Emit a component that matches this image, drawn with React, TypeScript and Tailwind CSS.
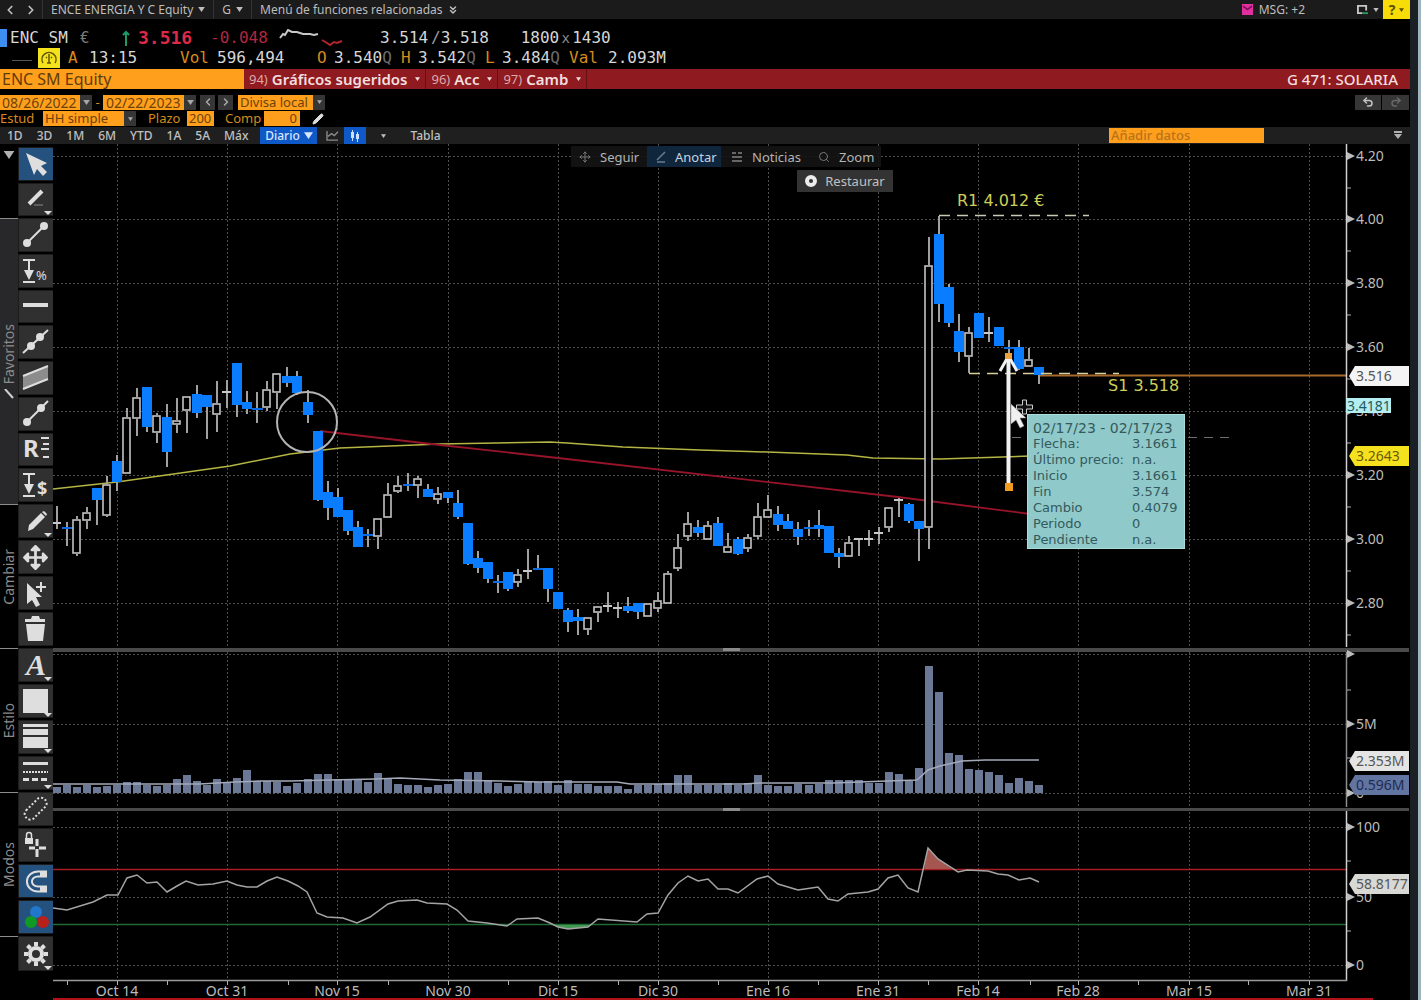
import React from 'react';
import { FaArrowsAlt } from 'react-icons/fa';
import { ChevronLeft, ChevronRight, ChevronsDown, Undo2, Redo2, Move, Search, Pencil } from 'lucide-react';

// y values per session: [high, body top, body bottom, low, kind]
// d = down (filled), u = up (hollow), x = flat white, b = flat blue
type Candle = [number, number, number, number, 'd' | 'u' | 'x' | 'b'];

const candles: Candle[] = [
  [506, 523, 523, 529, 'x'], [522, 528, 528, 546, 'b'], [516, 519, 554, 556, 'u'], [507, 512, 521, 529, 'u'],
  [488, 488, 500, 525, 'd'], [476, 484, 516, 517, 'u'], [455, 461, 482, 491, 'd'], [408, 417, 474, 474, 'u'],
  [388, 397, 419, 436, 'u'], [387, 387, 427, 432, 'd'], [413, 415, 433, 443, 'u'], [404, 417, 452, 467, 'd'],
  [398, 420, 425, 433, 'u'], [396, 396, 411, 433, 'u'], [385, 394, 413, 418, 'd'], [395, 395, 407, 439, 'd'],
  [381, 403, 415, 432, 'u'], [380, 392, 392, 408, 'x'], [363, 363, 405, 417, 'd'], [391, 402, 409, 414, 'd'],
  [392, 409, 409, 423, 'b'], [381, 389, 408, 411, 'u'], [373, 373, 393, 409, 'u'], [367, 376, 383, 387, 'd'],
  [371, 376, 393, 395, 'd'], [390, 402, 415, 423, 'd'], [431, 431, 500, 501, 'd'], [481, 492, 508, 520, 'd'],
  [488, 497, 517, 517, 'd'], [510, 510, 531, 535, 'd'], [521, 527, 547, 547, 'd'], [529, 535, 535, 547, 'b'],
  [518, 518, 537, 549, 'u'], [483, 494, 518, 518, 'u'], [476, 485, 492, 493, 'u'], [473, 485, 485, 491, 'b'],
  [476, 478, 486, 498, 'u'], [484, 489, 497, 497, 'd'], [487, 493, 500, 504, 'u'], [492, 492, 498, 503, 'd'],
  [490, 503, 517, 519, 'd'], [523, 523, 564, 565, 'd'], [551, 558, 568, 573, 'd'], [562, 562, 579, 583, 'd'],
  [575, 582, 582, 593, 'b'], [572, 572, 589, 591, 'd'], [569, 574, 583, 587, 'u'], [549, 571, 571, 579, 'x'],
  [555, 569, 569, 570, 'b'], [568, 568, 589, 602, 'd'], [592, 592, 609, 609, 'd'], [608, 610, 622, 632, 'd'],
  [609, 617, 621, 635, 'd'], [617, 617, 630, 635, 'u'], [606, 606, 613, 622, 'u'], [592, 606, 606, 612, 'x'],
  [602, 608, 608, 618, 'x'], [597, 606, 611, 613, 'd'], [603, 603, 612, 619, 'd'], [603, 603, 617, 617, 'u'],
  [592, 600, 609, 612, 'u'], [571, 573, 604, 604, 'u'], [534, 547, 569, 571, 'u'], [512, 523, 537, 541, 'u'],
  [520, 527, 533, 537, 'd'], [521, 525, 540, 540, 'u'], [517, 523, 546, 546, 'd'], [533, 546, 553, 553, 'u'],
  [537, 539, 554, 555, 'd'], [534, 537, 549, 552, 'u'], [503, 516, 537, 539, 'u'], [495, 509, 518, 518, 'u'],
  [506, 514, 525, 531, 'd'], [514, 521, 529, 529, 'd'], [522, 529, 537, 545, 'd'], [520, 528, 528, 536, 'b'],
  [510, 525, 529, 537, 'd'], [526, 526, 553, 553, 'd'], [548, 553, 557, 568, 'd'], [536, 542, 557, 557, 'u'],
  [539, 539, 539, 556, 'x'], [530, 539, 539, 546, 'x'], [527, 533, 533, 544, 'x'], [507, 507, 528, 532, 'u'],
  [498, 500, 500, 517, 'x'], [503, 504, 521, 523, 'd'], [521, 521, 529, 561, 'd'], [237, 265, 528, 549, 'u'],
  [216, 234, 304, 322, 'd'], [284, 287, 323, 327, 'd'], [314, 331, 352, 362, 'd'], [327, 332, 357, 373, 'u'],
  [313, 313, 338, 338, 'd'], [317, 333, 333, 342, 'x'], [327, 327, 346, 346, 'd'], [340, 348, 348, 353, 'b'],
  [340, 347, 369, 370, 'd'], [348, 359, 367, 367, 'u'], [367, 367, 375, 384, 'd'],
];

const volumes = [
  6, 8, 6, 8, 6, 7, 8, 11, 11, 8, 7, 8, 14, 18, 12, 8, 14, 11, 15, 23, 12, 12, 11, 7, 10, 14, 19, 19, 14, 14, 13, 11, 20,
  14, 9, 8, 8, 6, 8, 9, 14, 21, 21, 13, 10, 7, 9, 11, 11, 12, 8, 13, 9, 9, 7, 7, 7, 4, 8, 8, 9, 10, 18, 18, 8, 8, 8, 10,
  8, 10, 18, 8, 7, 7, 9, 8, 9, 13, 13, 13, 13, 10, 10, 21, 19, 12, 25, 127, 101, 40, 38, 24, 23, 21, 18, 10, 15, 12, 8,
];

const movingAverage =
  '53,489 117,482 230,466 290,454 340,448 440,444 550,442 567,443 623,447 700,450 767,452 847,455 873,458 940,459 1030,456';

const volumeAverage =
  '53,784 200,784 235,782 260,781 290,781 330,780 375,779 400,778 440,780 500,781 540,782 617,782 630,784 743,784 760,783 833,783 887,781 917,780 928,770 940,766 962,761 985,760 1039,760';

const rsi =
  '53,908 67,910 93,902 107,895 118,895 127,878 137,875 147,883 157,882 167,892 177,886 186,881 198,885 213,884 227,881 237,885 247,887 257,887 267,881 277,877 288,881 298,886 307,892 317,913 327,917 343,918 357,923 370,917 388,904 398,901 417,900 427,903 447,904 457,910 468,921 487,923 507,926 517,919 538,918 550,923 558,927 568,929 588,927 598,919 637,922 647,914 658,913 668,895 678,883 688,876 698,881 708,879 718,889 728,889 738,893 757,879 768,876 778,884 798,890 818,887 828,899 838,901 848,894 868,892 878,889 888,878 898,875 908,888 918,892 928,848 938,859 958,872 967,870 988,871 998,874 1008,875 1019,880 1030,878 1039,882';

const dates: [number, string][] = [
  [117, 'Oct 14'], [227, 'Oct 31'], [337, 'Nov 15'], [448, 'Nov 30'], [558, 'Dic 15'], [658, 'Dic 30'],
  [768, 'Ene 16'], [878, 'Ene 31'], [978, 'Feb 14'], [1078, 'Feb 28'], [1189, 'Mar 15'], [1309, 'Mar 31'],
];

const priceLevels: [number, string][] = [
  [156, '4.20'], [219, '4.00'], [283, '3.80'], [347, '3.60'], [411, '3.40'], [475, '3.20'], [539, '3.00'], [603, '2.80'],
];

const lowerLevels: [number, string][] = [
  [654, ''], [724, '5M'], [793, '0'], [827, '100'], [897, '50'], [965, '0'],
];

const minorX = [67, 167, 288, 388, 508, 618, 718, 818, 928, 1030, 1138, 1248];
const minorY = [188, 251, 315, 379, 443, 507, 571, 635, 690, 758, 861, 931];

const candleX = (i: number) => Math.round(57 + i * 10.02);

const Caret: React.FC<{ className?: string }> = ({ className = 'w-[7px] h-[5px]' }) => (
  <svg viewBox="0 0 8 6" className={`shrink-0 ${className}`} fill="currentColor">
    <path d="M0 0h8L4 6z" />
  </svg>
);

const CandleStick: React.FC<{ x: number; c: Candle }> = ({ x, c }) => {
  const [high, top, bottom, low, kind] = c;
  return (
    <g>
      <path d={`M${x} ${high}V${top}M${x} ${bottom}V${low}`} stroke="#a0a0a0" strokeWidth="2" />
      {kind === 'd' && <rect x={x - 5} y={top} width="10" height={bottom - top} fill="#0a7cff" />}
      {kind === 'u' && (
        <rect x={x - 4} y={top + 1} width="7" height={Math.max(bottom - top - 2, 3)} fill="#000" stroke="#c4c4c4" strokeWidth="1.6" />
      )}
      {kind === 'x' && <rect x={x - 5} y={top - 1} width="9" height="2" fill="#c8c8c8" />}
      {kind === 'b' && <rect x={x - 5} y={top - 1} width="11" height="2" fill="#0a6ae0" />}
    </g>
  );
};

const Tag: React.FC<{ y: number; label: string; bg: string; color: string }> = ({ y, label, bg, color }) => (
  <g>
    <path d={`M1349 ${y}l6 -10h54v20h-54z`} fill={bg} />
    <text x="1356" y={y + 5} fontSize="14" fill={color}>
      {label}
    </text>
  </g>
);

const Chart: React.FC = () => (
  <svg viewBox="53 144 1357 856" className="block w-full h-auto" fontFamily='"Noto Sans", sans-serif'>
    <rect x="53" y="144" width="1357" height="856" fill="#000" />

    {/* Grid */}
    <g stroke="#505050" strokeDasharray="2 2">
      {dates.map(([x]) => (
        <path key={x} d={`M${x + 0.5} 144V981`} />
      ))}
      {[...priceLevels, ...lowerLevels].map(([y]) => (
        <path key={y} d={`M53 ${y + 0.5}H1346`} />
      ))}
    </g>

    {/* Volume */}
    {volumes.map((h, i) => (
      <rect key={i} x={candleX(i) - 4} y={793 - h} width="8" height={h} fill="#6b7896" />
    ))}
    <polyline points={volumeAverage} fill="none" stroke="#a4aaba" strokeWidth="1.5" />

    {/* RSI */}
    <path d="M53 869.5H1346" stroke="#a81c24" strokeWidth="1.5" />
    <path d="M53 924.5H1346" stroke="#1f6a35" strokeWidth="1.5" />
    <path d="M924 869L928 848L938 859L952 869z" fill="#a65650" />
    <path d="M553 925L558 927L568 929L588 927L591 925z" fill="#3f9a50" />
    <polyline points={rsi} fill="none" stroke="#a4a4a4" strokeWidth="1.5" />

    {/* Overlays under the candles */}
    <polyline points={movingAverage} fill="none" stroke="#b5b544" strokeWidth="1.5" />
    <path d="M320 431L440 445L558 458L898 497L1030 514" fill="none" stroke="#96142a" strokeWidth="1.8" />
    <path d="M1040 375.5H1346" stroke="#a86a2a" strokeWidth="2" />
    {candles.map((c, i) => (
      <CandleStick key={i} x={candleX(i)} c={c} />
    ))}
    <circle cx="307" cy="422" r="30" fill="none" stroke="#b4b4b4" strokeWidth="2" />

    {/* Support and resistance */}
    <path d="M939 215.5H1089" stroke="#c9c9b4" strokeWidth="1.5" strokeDasharray="11 7" />
    <path d="M969 373.5H1119" stroke="#d9cf9a" strokeWidth="1.5" strokeDasharray="11 7" />
    <path d="M1012 437.5H1230" stroke="#6e6e6e" strokeDasharray="9 7" />
    <g fontFamily='"DejaVu Sans", sans-serif' fontSize="16" fill="#cccf58">
      <text x="957" y="206">R1 4.012 €</text>
      <text x="1108" y="391">S1 3.518</text>
    </g>

    {/* Measuring arrow and pointer */}
    <path d="M1008.5 358V486" stroke="#f2f2f2" strokeWidth="4" />
    <path d="M1000 371L1008.500 356L1017 371" fill="none" stroke="#f2f2f2" strokeWidth="3" />
    <rect x="1005" y="353" width="7" height="6" fill="#f0a040" />
    <rect x="1005" y="483" width="8" height="8" fill="#f09a1e" />
    <path d="M1011 404v20l5 -4l4 8l4 -2l-4 -8h6z" fill="#f0f0f0" stroke="#888" strokeWidth="0.5" />
    <path d="M1022.500 400h4v5h6v4h-6v5h-4v-5h-6v-4h6z" fill="#111" stroke="#cfcfcf" />

    {/* Panel separators */}
    <g fill="#4a4a4a">
      <rect x="53" y="648" width="1356" height="4" />
      <rect x="53" y="808" width="1356" height="3" />
      <rect x="723" y="648" width="17" height="3" fill="#8a8a8a" />
      <rect x="723" y="808" width="17" height="3" fill="#8a8a8a" />
    </g>

    {/* Axes */}
    <path d="M1346.500 144V647M1346.500 811V981" stroke="#d0d0d0" strokeWidth="1.5" />
    <path d="M1346.500 652V807" stroke="#8d8d8d" strokeWidth="1.5" />
    <path d="M53 980.500H1347" stroke="#9a9a9a" strokeWidth="1.5" />
    <g stroke="#b0b0b0">
      {minorY.map((y) => (
        <path key={y} d={`M1347 ${y}h4`} />
      ))}
      {minorX.map((x) => (
        <path key={x} d={`M${x + 0.5} 981v4`} />
      ))}
      {dates.map(([x]) => (
        <path key={x} d={`M${x + 0.5} 981v4`} />
      ))}
    </g>
    <g fontSize="14" fill="#bcbcbc">
      {[...priceLevels, ...lowerLevels].map(([y, label]) => (
        <g key={y}>
          <path d={`M1347 ${y - 4}l8 4l-8 4z`} />
          <text x="1356" y={y + 5}>{label}</text>
        </g>
      ))}
      {dates.map(([x, label]) => (
        <text key={label} x={x} y="996" textAnchor="middle">{label}</text>
      ))}
    </g>
    <Tag y={376} label="3.516" bg="#f4f4f4" color="#555" />
    <rect x="1346" y="398" width="45" height="15" fill="#b4eef0" />
    <text x="1347" y="411" fontSize="14" fill="#1f5a60">3.4181</text>
    <Tag y={456} label="3.2643" bg="#f5e11e" color="#6b5a00" />
    <Tag y={761} label="2.353M" bg="#e4e4e4" color="#555" />
    <Tag y={785} label="0.596M" bg="#6274a0" color="#1c2c54" />
    <Tag y={884} label="58.8177" bg="#d8d8d4" color="#555" />
    <rect x="53" y="998" width="1320" height="2" fill="#b01218" />
  </svg>
);

const cornerMark = <path d="M25 29h8l-4 4z" />;

const tapeArrow = (
  <>
    <path d="M4 6h12M10 6v12M4 28h12" stroke="currentColor" strokeWidth="2" />
    <path d="M5 16h10l-5 10z" />
  </>
);

const toolGroups: { label: string; height: string; tools: { name: string; active?: boolean; icon: React.ReactNode }[] }[] = [
  {
    label: '',
    height: 'h-[71px]',
    tools: [
      { name: 'Seleccionar', active: true, icon: <path d="M7 6l21 10l-6 3l6 6l-4 4l-6 -7l-3 6z" /> },
      {
        name: 'Dibujar',
        icon: (
          <>
            <path d="M10 22L23 9" stroke="currentColor" strokeWidth="4" />
            <path d="M15 23h9" stroke="#8a8a8a" strokeWidth="1" />
            {cornerMark}
          </>
        ),
      },
    ],
  },
  {
    label: 'Favoritos',
    height: 'h-[286px]',
    tools: [
      {
        name: 'Línea',
        icon: (
          <>
            <path d="M8 25L25 8" stroke="currentColor" strokeWidth="2" />
            <circle cx="8" cy="25" r="4" />
            <circle cx="25" cy="8" r="4" />
          </>
        ),
      },
      {
        name: 'Cambio porcentual',
        icon: (
          <>
            {tapeArrow}
            <text x="17" y="26" fontSize="13">%</text>
          </>
        ),
      },
      { name: 'Horizontal', icon: <path d="M4 14h25v4h-25z" /> },
      {
        name: 'Recta',
        icon: (
          <>
            <path d="M4 28L29 5" stroke="currentColor" strokeWidth="2" />
            <circle cx="12" cy="21" r="4" />
            <circle cx="21" cy="12" r="4" />
          </>
        ),
      },
      {
        name: 'Canal',
        icon: (
          <>
            <path d="M4 15L29 5V18L4 28z" fill="#8c8c8c" />
            <path d="M4 15L29 5M4 28L29 18" stroke="currentColor" strokeWidth="2" />
          </>
        ),
      },
      {
        name: 'Rayo',
        icon: (
          <>
            <path d="M8 25L29 4" stroke="currentColor" strokeWidth="2" />
            <circle cx="8" cy="25" r="4" />
            <circle cx="22" cy="11" r="4" />
          </>
        ),
      },
      {
        name: 'Regresión',
        icon: (
          <>
            <text x="4" y="25" fontSize="24" fontWeight="700">R</text>
            <path d="M22 6h8M24 12h6M22 17h8M24 25h6" stroke="currentColor" strokeWidth="2" />
          </>
        ),
      },
      {
        name: 'Cambio de precio',
        icon: (
          <>
            {tapeArrow}
            <text x="18" y="27" fontSize="18" fontWeight="700">$</text>
          </>
        ),
      },
    ],
  },
  {
    label: 'Cambiar',
    height: 'h-[144px]',
    tools: [
      {
        name: 'Editar',
        icon: (
          <>
            <path d="M9 27l1 -6L22 9l4 4L14 25z" />
            <path d="M23 8l2 -1l3 3l-1 2z" />
            {cornerMark}
          </>
        ),
      },
      { name: 'Mover', icon: <FaArrowsAlt x="4" y="5" size={25} /> },
      {
        name: 'Duplicar',
        icon: (
          <>
            <path d="M8 7v21l5 -4l4 7l4 -2l-4 -8h6z" />
            <path d="M22 6v10M17 11h10" stroke="currentColor" strokeWidth="2" />
          </>
        ),
      },
      { name: 'Eliminar', icon: <path d="M6 7h6l1 -3h7l1 3h5v3H6zM7 12h19l-2 17H9z" /> },
    ],
  },
  {
    label: 'Estilo',
    height: 'h-[144px]',
    tools: [
      {
        name: 'Texto',
        icon: (
          <>
            <text x="7" y="27" fontSize="30" fontStyle="italic" fontWeight="700" fontFamily='"Liberation Serif", serif'>A</text>
            {cornerMark}
          </>
        ),
      },
      { name: 'Relleno', icon: <><path d="M4 5h25v24H4z" />{cornerMark}</> },
      { name: 'Grosor', icon: <><path d="M4 4h25v3H4zM4 9h25v6H4zM4 17h25v11H4z" />{cornerMark}</> },
      {
        name: 'Trazo',
        icon: (
          <>
            <path d="M4 7.500h25" stroke="currentColor" strokeWidth="3" />
            <path d="M4 16h25" stroke="currentColor" strokeWidth="2" strokeDasharray="2 1" />
            <path d="M4 23.500h25" stroke="currentColor" strokeWidth="3" strokeDasharray="6 3" />
            {cornerMark}
          </>
        ),
      },
    ],
  },
  {
    label: 'Modos',
    height: 'h-[144px]',
    tools: [
      {
        name: 'Oculto',
        icon: (
          <rect x="4" y="11" width="26" height="11" rx="5" transform="rotate(-45 17 17)" fill="none" stroke="currentColor" strokeWidth="2" strokeDasharray="2 2" />
        ),
      },
      {
        name: 'Bloquear',
        icon: (
          <>
            <path d="M6 10h8v6H6z" />
            <path d="M7.500 10V7a2.500 2.500 0 0 1 5 0v3" fill="none" stroke="currentColor" strokeWidth="1.500" />
            <path d="M18 11v7M18 21v8M10 20h6M20 20h7" stroke="currentColor" strokeWidth="3" />
          </>
        ),
      },
      {
        name: 'Imán',
        active: true,
        icon: (
          <>
            <path d="M28 10h-9a8 7 0 0 0 0 15h9" fill="none" stroke="currentColor" strokeWidth="7" />
            <path d="M21 10h-2a8 7 0 0 0 0 15h2" fill="none" stroke="#24517d" strokeWidth="3" />
          </>
        ),
      },
      {
        name: 'Colores',
        active: true,
        icon: (
          <>
            <circle cx="17" cy="12" r="6" fill="#2277cc" />
            <circle cx="12" cy="22" r="6" fill="#109a24" />
            <circle cx="24" cy="22" r="6" fill="#b8201c" />
          </>
        ),
      },
    ],
  },
  {
    label: '',
    height: 'h-[37px]',
    tools: [
      {
        name: 'Ajustes',
        icon: (
          <>
            <circle cx="17" cy="17" r="6" fill="none" stroke="currentColor" strokeWidth="4" />
            <path
              d="M17 5v4M17 25v4M5 17h4M25 17h4M8.500 8.500l3 3M22.500 22.500l3 3M8.500 25.500l3 -3M22.500 11.500l3 -3"
              stroke="currentColor"
              strokeWidth="4"
            />
            {cornerMark}
          </>
        ),
      },
    ],
  },
];

const Sidebar: React.FC = () => (
  <aside className="w-[53px] shrink-0 pt-[3px] bg-black text-[#dedede]">
    {toolGroups.map((group, i) => (
      <div key={i} className={`flex ${group.height}`}>
        <div
          className={`w-[18px] shrink-0 flex flex-col items-center justify-center gap-1 text-[#8c8c8c] ${
            i > 0 ? 'border-t border-[#8c8c8c]' : ''
          } ${group.label === 'Favoritos' ? 'bg-[#28282b]' : ''}`}
        >
          {i === 0 && <Caret className="w-3 h-2 mb-auto mt-1 text-[#b0b0b0]" />}
          {group.label && (
            <span className="text-sm leading-[18px] [writing-mode:vertical-rl] rotate-180">{group.label}</span>
          )}
          {group.label === 'Favoritos' && (
            <svg viewBox="0 0 10 10" className="w-[10px] h-[10px]">
              <path d="M1 0L9 9" stroke="#d0d0d0" strokeWidth="2" />
            </svg>
          )}
        </div>
        <div className="flex-1 flex flex-col gap-[2px] pb-[2px]">
          {group.tools.map((tool) => (
            <button
              key={tool.name}
              aria-label={tool.name}
              className={`flex-1 min-h-0 flex items-center justify-center border border-[#1c1c1c] ${
                tool.active ? 'bg-[#24517d]' : 'bg-[#303030]'
              }`}
            >
              <svg viewBox="0 0 34 34" className="w-[34px] h-[34px] shrink-0" fill="currentColor" fontFamily='"Noto Sans", sans-serif'>
                {tool.icon}
              </svg>
            </button>
          ))}
        </div>
      </div>
    ))}
  </aside>
);

const TopBar: React.FC = () => (
  <nav className="h-[19px] flex items-center bg-[#1b1b1b] text-xs text-[#bdbdbd]">
    <button aria-label="Atrás" className="w-[19px] flex justify-center"><ChevronLeft size={14} strokeWidth={3} /></button>
    <button aria-label="Adelante" className="w-[23px] flex justify-center"><ChevronRight size={14} strokeWidth={3} /></button>
    <button className="h-full px-2 border-l border-[#333] flex items-center gap-[5px]">ENCE ENERGIA Y C Equity <Caret /></button>
    <button className="h-full px-2 border-l border-[#333] flex items-center gap-[5px]">G <Caret /></button>
    <button className="h-full px-2 border-l border-[#333] flex items-center gap-1">
      Menú de funciones relacionadas <ChevronsDown size={12} strokeWidth={3} />
    </button>
    <div className="ml-auto flex items-center h-full">
      <svg viewBox="0 0 10 10" className="w-[11px] h-[11px] mr-[6px]">
        <rect width="10" height="10" fill="#e22fa0" />
        <path d="M1 2l4 3l4 -3" fill="none" stroke="#7c0f55" strokeWidth="1.500" />
      </svg>
      <span>MSG: +2</span>
      <button aria-label="Ventana" className="ml-[51px] mr-1 flex items-center gap-1">
        <svg viewBox="0 0 14 12" className="w-[13px] h-[11px]" fill="none">
          <path d="M7 10H2V2h9v5" stroke="#c8c8c8" strokeWidth="2" />
          <path d="M7 10h6" stroke="#2c9a58" strokeWidth="2" />
        </svg>
        <Caret className="w-[6px] h-1" />
      </button>
      <button aria-label="Ayuda" className="w-[27px] h-full bg-[#f7dc08] text-[#5c5000] flex items-center justify-center gap-1 text-sm font-bold">
        ? <Caret className="w-[5px] h-1" />
      </button>
    </div>
  </nav>
);

const Quote: React.FC = () => (
  <header className="font-['DejaVu_Sans_Mono',monospace] text-base leading-5 text-[#d6d6d6] pt-[9px] pb-px">
    <div className="flex items-center h-5">
      <span className="w-[7px] h-[18px] bg-[#3c8ef0] mr-[3px]" />
      <span className="w-[70px]">ENC SM</span>
      <span className="w-[42px] text-[#7a7a7a]">€</span>
      <svg viewBox="0 0 8 16" className="w-2 h-4 mr-2">
        <path d="M4 16V2M1 5l3 -3l3 3" fill="none" stroke="#1f9a66" strokeWidth="2" />
      </svg>
      <span className="w-[72px] text-lg font-bold text-[#dc2a48]">3.516</span>
      <span className="w-[69px] text-[#b02840]">-0.048</span>
      <svg viewBox="0 0 64 18" className="w-16 h-[18px] mr-[37px]" fill="none" strokeWidth="2">
        <path d="M1 9l3 -4l2 1l3 -5l4 2l5 0l6 2l7 0l4 1l4 -1" stroke="#c8c8c8" />
        <path d="M43 11l5 3l3 2l4 -3l3 1l5 -2" stroke="#b3242c" />
      </svg>
      <span className="w-[51px]">3.514</span>
      <span className="text-[#9c9c9c]">/</span>
      <span className="w-[80px]">3.518</span>
      <span>1800</span>
      <span className="w-[13px] text-center text-sm text-[#8c8c8c]">x</span>
      <span>1430</span>
    </div>
    <div className="flex items-center h-5">
      <span className="w-5 h-px bg-[#555] ml-3 mr-[6px] mt-1" />
      <svg viewBox="0 0 22 20" className="w-[22px] h-5 mr-2">
        <rect width="22" height="20" fill="#f4e21c" />
        <path d="M5 15a7 7 0 1 1 12 0M11 6v9M9 15h4M8 9l1 1M14 9l-1 1" fill="none" stroke="#5f5600" strokeWidth="1.500" />
      </svg>
      <span className="w-[21px] text-[#d58a1e]">A</span>
      <span className="w-[91px]">13:15</span>
      <span className="w-[37px] text-[#d58a1e]">Vol</span>
      <span className="w-[100px]">596,494</span>
      <span className="w-[17px] text-[#d58a1e]">O</span>
      <span className="w-[67px]">3.540<span className="text-[#6c6c6c]">Q</span></span>
      <span className="w-[17px] text-[#d58a1e]">H</span>
      <span className="w-[67px]">3.542<span className="text-[#6c6c6c]">Q</span></span>
      <span className="w-[17px] text-[#d58a1e]">L</span>
      <span className="w-[67px]">3.484<span className="text-[#6c6c6c]">Q</span></span>
      <span className="w-[39px] text-[#d58a1e]">Val</span>
      <span>2.093M</span>
    </div>
  </header>
);

const actions = [
  { num: '94)', label: 'Gráficos sugeridos' },
  { num: '96)', label: 'Acc' },
  { num: '97)', label: 'Camb' },
];

const ActionBar: React.FC = () => (
  <div className="h-[20px] flex items-center bg-[#8f1a20] text-[15px] leading-5 text-[#f2dede]">
    <input
      aria-label="Valor"
      defaultValue="ENC SM Equity"
      className="w-[244px] h-full px-[2px] bg-[#ff9f1c] text-[#5f3c08] text-base leading-5 outline-none"
    />
    {actions.map((a) => (
      <button key={a.num} className="h-full px-[5px] flex items-center border-r border-[#661016]">
        <span className="text-[13px] text-[#dcaaaa] mr-1">{a.num}</span>
        <span className="font-semibold">{a.label}</span>
        <Caret className="w-[5px] h-1 ml-2" />
      </button>
    ))}
    <span className="ml-auto pr-3 font-medium">G 471: SOLARIA</span>
  </div>
);

const orangeField = 'h-[15px] bg-[#ff9f1c] text-[#6b430a] outline-none appearance-none rounded-none';
const greyButton = 'h-[15px] bg-[#363636] flex items-center justify-center';

const Filters: React.FC = () => (
  <div className="h-[38px] pt-[5px] text-[13px] leading-[15px] text-[#d58a1e]">
    <div className="flex items-center h-4">
      <input aria-label="Desde" defaultValue="08/26/2022" className={`${orangeField} w-[80px] px-[2px] text-sm leading-[15px]`} />
      <button aria-label="Calendario desde" className={`${greyButton} w-3 text-[#a8a8a8]`}><Caret /></button>
      <span className="w-[11px] text-center">-</span>
      <input aria-label="Hasta" defaultValue="02/22/2023" className={`${orangeField} w-[81px] px-[3px] text-sm leading-[15px]`} />
      <button aria-label="Calendario hasta" className={`${greyButton} w-3 mr-1 text-[#a8a8a8]`}><Caret /></button>
      <button aria-label="Periodo anterior" className={`${greyButton} w-[15px] mr-[3px] text-[#a8a8a8]`}><ChevronLeft size={12} strokeWidth={3} /></button>
      <button aria-label="Periodo siguiente" className={`${greyButton} w-[15px] mr-[5px] text-[#a8a8a8]`}><ChevronRight size={12} strokeWidth={3} /></button>
      <select aria-label="Divisa" className={`${orangeField} w-[75px] px-[2px]`}>
        <option>Divisa local</option>
      </select>
      <span className={`${greyButton} w-3 text-[#a8a8a8]`}><Caret className="w-[5px] h-1" /></span>
      <div className="ml-auto mr-px flex gap-px">
        <button aria-label="Deshacer" className={`${greyButton} w-[26px] text-[#c4c4c4]`}><Undo2 size={12} strokeWidth={3} /></button>
        <button aria-label="Rehacer" className={`${greyButton} w-[27px] text-[#6a6a6a]`}><Redo2 size={12} strokeWidth={3} /></button>
      </div>
    </div>
    <div className="flex items-center h-[17px]">
      <label htmlFor="estud" className="w-[43px]">Estud</label>
      <select id="estud" className={`${orangeField} w-[81px] px-[2px]`}>
        <option>HH simple</option>
      </select>
      <span className={`${greyButton} w-3 mr-3 text-[#a8a8a8]`}><Caret className="w-[5px] h-1" /></span>
      <label htmlFor="plazo" className="w-[39px]">Plazo</label>
      <input id="plazo" defaultValue="200" className={`${orangeField} w-[27px] px-[2px]`} />
      <label htmlFor="comp" className="w-[50px] pl-[11px]">Comp</label>
      <input id="comp" defaultValue="0" className={`${orangeField} w-[36px] px-[3px] text-right`} />
      <button aria-label="Editar estudio" className="ml-3 text-[#dedede]"><Pencil size={12} fill="currentColor" /></button>
    </div>
  </div>
);

const ranges = ['1D', '3D', '1M', '6M', 'YTD', '1A', '5A', 'Máx'];

const RangeBar: React.FC = () => (
  <div className="h-[17px] flex items-center bg-[#1f1f1f] text-xs leading-[17px] font-medium text-[#c0c0c0]">
    <div className="flex gap-[14px] pl-[7px]">
      {ranges.map((r) => (
        <button key={r}>{r}</button>
      ))}
    </div>
    <button className="ml-3 h-full w-[57px] flex items-center justify-center gap-1 bg-[#0f58c8] text-[#d8e6ff]">
      Diario <Caret className="w-[9px] h-[7px]" />
    </button>
    <button aria-label="Línea" className="ml-[9px]">
      <svg viewBox="0 0 14 12" className="w-[13px] h-[11px]" fill="none" stroke="#8a8a8a" strokeWidth="1.500">
        <path d="M1 1v10h12M2 7l4 -3l3 2l4 -4" />
      </svg>
    </button>
    <button aria-label="Velas" className="ml-[5px] h-full w-[22px] bg-[#0f58c8] flex items-center justify-center">
      <svg viewBox="0 0 12 12" className="w-3 h-3" fill="#cfe0ff">
        <path d="M3 0h1v2h1v6H4v3H3V8H2V2h1zM8 2h1v2h1v5H9v3H8V9H7V4h1z" />
      </svg>
    </button>
    <button aria-label="Más tipos" className="ml-[15px]"><Caret className="w-[5px] h-1" /></button>
    <button className="ml-6">Tabla</button>
    <input
      aria-label="Añadir datos"
      placeholder="Añadir datos"
      className="ml-auto h-[15px] w-[155px] px-[2px] bg-[#ff9f1c] text-[13px] leading-[15px] placeholder:text-[#b8731a] outline-none"
    />
    <button aria-label="Opciones" className="ml-[130px] mr-2">
      <svg viewBox="0 0 8 9" className="w-2 h-[9px]" fill="#b0b0b0">
        <path d="M0 0h8v2H0zM0 3h8L4 8z" />
      </svg>
    </button>
  </div>
);

const tooltipRows = [
  ['Flecha:', '3.1661'],
  ['Último precio:', 'n.a.'],
  ['Inicio', '3.1661'],
  ['Fin', '3.574'],
  ['Cambio', '0.4079'],
  ['Periodo', '0'],
  ['Pendiente', 'n.a.'],
];

const ArrowTooltip: React.FC = () => (
  <div className="absolute left-[974px] top-[270px] w-[158px] h-[135px] pl-[5px] pt-[5px] bg-[#8fc9ca] border border-[#a9dcdc] text-[#35595c] font-['DejaVu_Sans',sans-serif] text-[13px] leading-4 whitespace-nowrap">
    <table className="w-full">
      <caption className="text-left text-sm leading-4">02/17/23 - 02/17/23</caption>
      <tbody>
        {tooltipRows.map(([k, v]) => (
          <tr key={k}>
            <td className="p-0 w-[99px]">{k}</td>
            <td className="p-0">{v}</td>
          </tr>
        ))}
      </tbody>
    </table>
  </div>
);

const ChartToolbar: React.FC = () => (
  <div className="absolute left-[518px] top-[2px] w-[322px] text-[13px] leading-5 text-[#b4b4b4]">
    <div className="flex w-[310px] h-[21px] bg-[#141414]/90">
      <button className="w-[76px] pl-2 flex items-center gap-[9px]"><Move size={12} color="#777" />Seguir</button>
      <button className="w-[74px] pl-2 flex items-center gap-[8px] bg-[#10263c] text-[#c6d4e0]">
        <svg viewBox="0 0 12 12" className="w-3 h-3" fill="none" stroke="#6c7c8c" strokeWidth="1.500">
          <path d="M2 9l8 -8M2 11h8" />
        </svg>
        Anotar
      </button>
      <button className="w-[90px] pl-[10px] flex items-center gap-[9px]">
        <svg viewBox="0 0 12 12" className="w-3 h-3" stroke="#666" strokeWidth="2">
          <path d="M1 2h4M7 2h4M1 6h10M1 10h10" />
        </svg>
        Noticias
      </button>
      <button className="pl-[7px] flex items-center gap-[9px]"><Search size={12} color="#777" />Zoom</button>
    </div>
    <button className="ml-auto mt-[3px] w-[96px] h-[22px] flex items-center justify-center gap-2 bg-[#333] text-[#c0c0c0]">
      <span className="w-3 h-3 rounded-full border-4 border-[#ececec]" />
      Restaurar
    </button>
  </div>
);

const App: React.FC = () => {
  return (
    <div className="flex bg-black font-['Noto_Sans',sans-serif] overflow-hidden">
      <div className="flex-1 min-w-0">
        <TopBar />
        <Quote />
        <ActionBar />
        <Filters />
        <RangeBar />
        <main className="flex">
          <Sidebar />
          <div className="relative flex-1 min-w-0">
            <Chart />
            <ChartToolbar />
            <ArrowTooltip />
          </div>
        </main>
      </div>
      <div className="w-[11px] shrink-0 bg-[#1b2024] border-r-[3px] border-[#9fb4bc]" />
    </div>
  );
};

export default App;
